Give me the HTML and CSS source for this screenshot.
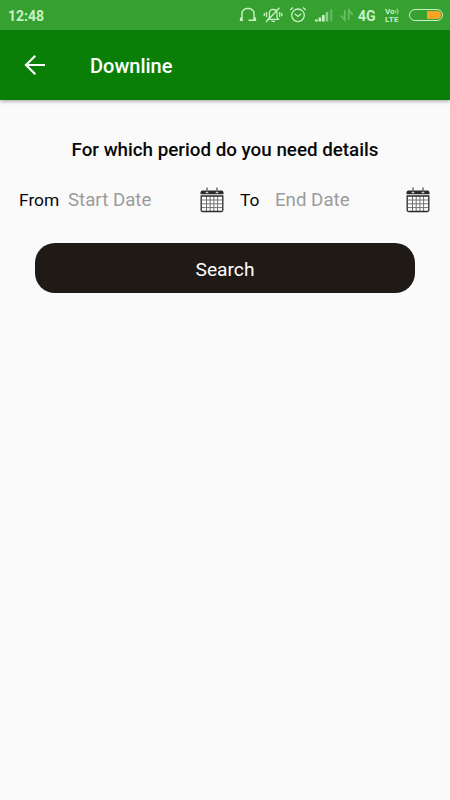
FILE: index.html
```html
<!DOCTYPE html>
<html lang="en">
<head>
<meta charset="utf-8">
<title>Downline</title>
<link rel="stylesheet" href="styles.css">
</head>
<body>
<svg class="defs" aria-hidden="true">
  <symbol id="calendar" viewBox="0 0 24 26">
    <path fill="#fff" d="M1.500 8h21v16h-21z"/>
    <path fill="#2b2b2d" d="M.500 5.400Q.5 3.500 2.500 3.500h19q2 0 2 1.900V7.200H.500z"/>
    <path d="M7 .500v5M17 .500v5" stroke="#6c6c70" stroke-width="1.500"/>
    <path d="M5.700 5.700h2.600M15.700 5.700h2.600" stroke="#ccc" stroke-width="1.200"/>
    <path d="M2 13h20M2 16.800h20M2 20.600h20M6.500 9v15M10.200 9v15M13.900 9v15M17.600 9v15" stroke="#707074" stroke-width="1"/>
    <path d="M1.200 9h21.600v14q0 1.500-1.500 1.500H2.700q-1.500 0-1.500-1.500z" fill="none" stroke="#29292b" stroke-width="1.300"/>
  </symbol>
</svg>
<header>
  <div class="status">
    <span class="clock">12:48</span>
    <svg class="headset" width="18" height="18" viewBox="0 0 18 18" fill="none" stroke="currentColor"><path stroke-width="1.400" d="M3 14V7.500A5 5 0 0 1 8 2.500h2a5 5 0 0 1 5 5V14"/><path stroke-width="1.800" d="M1.800 11.500V15M16.200 11.500V15"/><path stroke-width="1.500" d="M1 14.300h3M17 14.300H9.500"/></svg>
    <svg class="bell" width="20" height="18" viewBox="0 0 20 18" fill="none" stroke="currentColor" stroke-width="1.300"><path d="M5 13.300h10.500l-1.500-2V7q0-3.500-3.800-3.500T6.400 7v4.300zM8.500 15.300h3.500M3.500 6v5M1.300 7v3M16.700 6v5M18.800 7v3M16.500 1.800 3 16"/></svg>
    <svg class="alarm" width="18" height="18" viewBox="0 0 18 18" fill="none" stroke="currentColor" stroke-width="1.300"><circle cx="9" cy="9.300" r="6.300"/><path d="m5.700 7.700 3.300 2.700 3.200-2.700M1.200 4 4 1.600M14 1.600 16.800 4"/></svg>
    <svg class="signal" width="20" height="16" viewBox="0 0 20 16" fill="currentColor"><path d="M1 12.500h2.800V14.500H1zM4.600 10.500h2.600v4H4.600zM8 8h2.700v6.500H8z"/><path opacity=".6" d="M11.700 5h2.500v9.500h-2.500z"/><path opacity=".25" d="M15.800 2.500h2.700v12h-2.700z"/></svg>
    <svg class="data" width="14" height="14" viewBox="0 0 14 14" fill="none" stroke="currentColor" stroke-width="1.700"><path d="M1 7.500 4.800 12V2M8.700 12V2l4 5"/></svg>
    <span class="network">4G</span>
    <span class="volte"><span class="vo">Vo<svg width="4" height="7" viewBox="0 0 4 7" fill="none" stroke="currentColor" stroke-width=".8"><path d="M.5 2q1 1.500 0 3M2.200 .7q2 2.800 0 5.600"/></svg></span><span class="lte">LTE</span></span>
    <span class="battery"><span class="charge"></span></span>
  </div>
  <div class="toolbar">
    <svg class="back" width="24" height="24" viewBox="0 0 24 24" fill="none" stroke="#fff" stroke-width="2.200"><path d="M22 12H3.500M12.300 2.700 3 12l9.300 9.300"/></svg>
    <h1>Downline</h1>
  </div>
</header>
<main>
  <h2>For which period do you need details</h2>
  <div class="dates">
    <label class="from">From</label><span class="hint start">Start Date</span><svg class="cal"><use href="#calendar"/></svg>
    <label class="to">To</label><span class="hint">End Date</span><svg class="cal last"><use href="#calendar"/></svg>
  </div>
  <button>Search</button>
</main>
</body>
</html>
```
FILE: styles.css
```css
* { box-sizing: border-box; }
body { margin: 0; min-height: 800px; background: #fafafa; color: #080808; font-family: Roboto, sans-serif; }
.defs { position: absolute; width: 0; height: 0; }
header { height: 100px; background: #0a7f08; box-shadow: 0 1px 4px rgba(0,0,0,.38); }
.status { height: 30px; background: #36a130; color: #c9f2c3; display: flex; align-items: center; padding: 0 7px 0 8px; }
.status svg { flex: none; }
.clock { flex: none; font-size: 14px; font-weight: 700; width: 231px; padding-top: 2px; }
.bell { margin-left: 6px; }
.alarm { margin-left: 6px; }
.signal { margin-left: 7px; }
.data { margin-left: 6px; opacity: .35; }
.network { flex: none; margin-left: 4px; width: 27px; font-size: 14px; font-weight: 700; padding-top: 2px; }
.volte { display: flex; flex-direction: column; width: 20px; font-size: 8px; line-height: 8px; font-weight: 700; padding-top: 2px; }
.vo { display: flex; }
.lte { letter-spacing: .3px; }
.battery { flex: none; width: 34px; height: 12px; border: 1.500px solid #c9f2c3; border-radius: 6px; padding: 1px; display: flex; justify-content: flex-end; margin-left: auto; }
.charge { width: 14px; background: #f9a425; border-radius: 0 4px 4px 0; }
.toolbar { height: 70px; display: flex; align-items: center; padding-left: 23px; }
h1 { margin: 0 0 0 43px; padding-top: 1px; color: #fff; font-size: 20px; font-weight: 500; line-height: 24px; }
main { padding-top: 38px; }
h2 { margin: 0; text-align: center; font-size: 18.800px; font-weight: 500; line-height: 24px; }
.dates { display: flex; align-items: center; height: 28px; margin-top: 24px; padding: 0 19px; font-size: 17.400px; }
.from { width: 49px; }
.hint { color: #9b9b9b; font-size: 18.700px; padding-bottom: 1px; }
.start { width: 131px; }
.cal { width: 26px; height: 26px; flex: none; }
.to { width: 35px; margin-left: 15px; }
.last { margin-left: auto; }
button { display: block; width: 380px; height: 50px; margin: 29px auto 0; padding: 2px 0 0; border: 0; border-radius: 20px; background: #201a16; color: #fff; font: 400 19.200px Roboto, sans-serif; }
```
